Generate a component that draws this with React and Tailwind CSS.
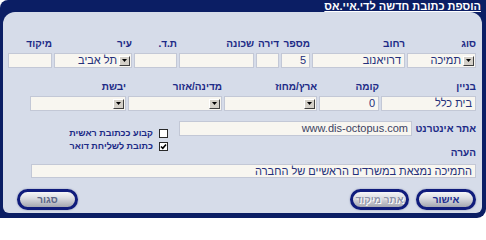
import React from "react";

function Label({ children }) {
  return (
    <div className="h-[12px] leading-[12px] text-[10px] font-bold text-[#1c2a86] whitespace-nowrap">
      {children}
    </div>
  );
}

function Box({ className = "", value, ltr }) {
  return (
    <div
      className={`bg-[#f8f6f0] border border-[#c3c8d6] flex items-center px-[3px] text-[11px] text-[#24307a] whitespace-nowrap overflow-hidden ${className}`}
    >
      {ltr ? <span dir="ltr" className="text-[#3b4262]">{value}</span> : value}
    </div>
  );
}

function Select({ className = "", value }) {
  return (
    <div
      className={`bg-[#f8f6f0] border border-[#c3c8d6] flex items-center pr-[1px] gap-[2px] text-[11px] text-[#24307a] whitespace-nowrap overflow-hidden ${className}`}
    >
      <span className="w-[11px] h-[10px] shrink-0 bg-[#d4d0c8] border border-t-white border-l-white border-r-[#404040] border-b-[#404040] flex items-center justify-center">
        <svg width="5" height="3" viewBox="0 0 5 3">
          <path d="M0 0h5L2.5 3z" fill="#000" />
        </svg>
      </span>
      <span>{value}</span>
    </div>
  );
}

function Field({ label, w, children }) {
  return (
    <div className={`flex flex-col gap-[3px] ${w}`}>
      <Label>{label}</Label>
      {children}
    </div>
  );
}

function Check({ checked, label }) {
  return (
    <div className="h-[13px] flex items-center gap-[6px]">
      <span className="w-[9px] h-[9px] bg-white border border-[#2a2a2a] flex items-center justify-center">
        {checked && (
          <svg width="7" height="7" viewBox="0 0 7 7">
            <path d="M1 3.5L2.8 5.3L6 1.5" stroke="#000" strokeWidth="1.6" fill="none" />
          </svg>
        )}
      </span>
      <span className="text-[9px] font-bold text-[#1c2a86] whitespace-nowrap">{label}</span>
    </div>
  );
}

function Btn({ children, w, tone }) {
  const color =
    tone === "dis"
      ? "text-[#8c92a8] [text-shadow:0_0_1px_#fff,1px_1px_0_#fff]"
      : tone === "mid"
      ? "text-[#5b6586]"
      : "text-[#1b2c8f]";
  return (
    <div
      className={`h-[21px] ${w} rounded-full border-[3px] border-[#101c7c] bg-[linear-gradient(#f6f6f8,#dcdde2_40%,#a4a6b0)] shadow-[0_0_2px_#8890b0] flex items-center justify-center text-[10px] font-bold ${color}`}
    >
      {children}
    </div>
  );
}

export default function App() {
  return (
    <div
      dir="rtl"
      className="w-[486px] h-[220px] bg-white font-['Liberation_Sans',Arial,sans-serif]"
    >
      <div className="w-[486px] h-[218px] bg-[#0b1e64] rounded-tl-[8px] rounded-br-[9px] flex flex-col">
        <div className="h-[12px] pr-[5px] text-[11px] leading-[12px] font-bold text-white underline whitespace-nowrap">
          הוספת כתובת חדשה לדי.איי.אס
        </div>
        <div className="mr-[4px] ml-[3px] h-[201px] bg-[#d6dce9] rounded-tl-[12px] rounded-tr-[12px] rounded-bl-[6px] rounded-br-[6px] pt-[26px] pr-[6px] pl-[4px] flex flex-col">
          <div className="flex gap-[2px]">
            <Field label="סוג" w="w-[69px]">
              <Select className="h-[15px]" value="תמיכה" />
            </Field>
            <Field label="רחוב" w="w-[93px]">
              <Box className="h-[15px]" value="דרויאנוב" />
            </Field>
            <Field label="מספר" w="w-[29px]">
              <Box className="h-[15px]" value="5" />
            </Field>
            <Field label="דירה" w="w-[23px]">
              <Box className="h-[15px]" value="" />
            </Field>
            <Field label="שכונה" w="w-[75px]">
              <Box className="h-[15px]" value="" />
            </Field>
            <Field label="ת.ד." w="w-[43px]">
              <Box className="h-[15px]" value="" />
            </Field>
            <Field label="עיר" w="w-[78px]">
              <Select className="h-[15px]" value="תל אביב" />
            </Field>
            <Field label="מיקוד" w="w-[44px]">
              <Box className="h-[15px]" value="" />
            </Field>
          </div>

          <div className="flex gap-[2px] mt-[13px]">
            <Field label="בניין" w="w-[95px]">
              <Box className="h-[15px]" value="בית כלל" />
            </Field>
            <Field label="קומה" w="w-[60px]">
              <Box className="h-[15px]" value="0" />
            </Field>
            <Field label="ארץ/מחוז" w="w-[93px]">
              <Select className="h-[15px]" value="" />
            </Field>
            <Field label="מדינה/אזור" w="w-[94px]">
              <Select className="h-[15px]" value="" />
            </Field>
            <Field label="יבשת" w="w-[96px]">
              <Select className="h-[15px]" value="" />
            </Field>
          </div>

          <div className="flex items-start h-[26px] mt-[10px]">
            <div className="w-[62px] h-[15px] flex items-center">
              <Label>אתר אינטרנט</Label>
            </div>
            <Box className="w-[233px] h-[15px] mr-[2px]" value="www.dis-octopus.com" ltr />
            <div className="flex flex-col mr-[11px] pt-[6px]">
              <Check label="קבוע ככתובת ראשית" />
              <Check checked label="כתובת לשליחת דואר" />
            </div>
          </div>

          <div className="flex flex-col gap-[5px]">
            <Label>הערה</Label>
            <Box className="w-[445px] h-[14px]" value="התמיכה נמצאת במשרדים הראשיים של החברה" />
          </div>

          <div className="flex justify-between items-center mt-[11px]">
            <div className="flex gap-[7px]">
              <Btn w="w-[60px]">אישור</Btn>
              <Btn w="w-[59px]" tone="dis">אתר מיקוד</Btn>
            </div>
            <div className="ml-[10px]">
              <Btn w="w-[61px]" tone="mid">סגור</Btn>
            </div>
          </div>
        </div>
      </div>
    </div>
  );
}
